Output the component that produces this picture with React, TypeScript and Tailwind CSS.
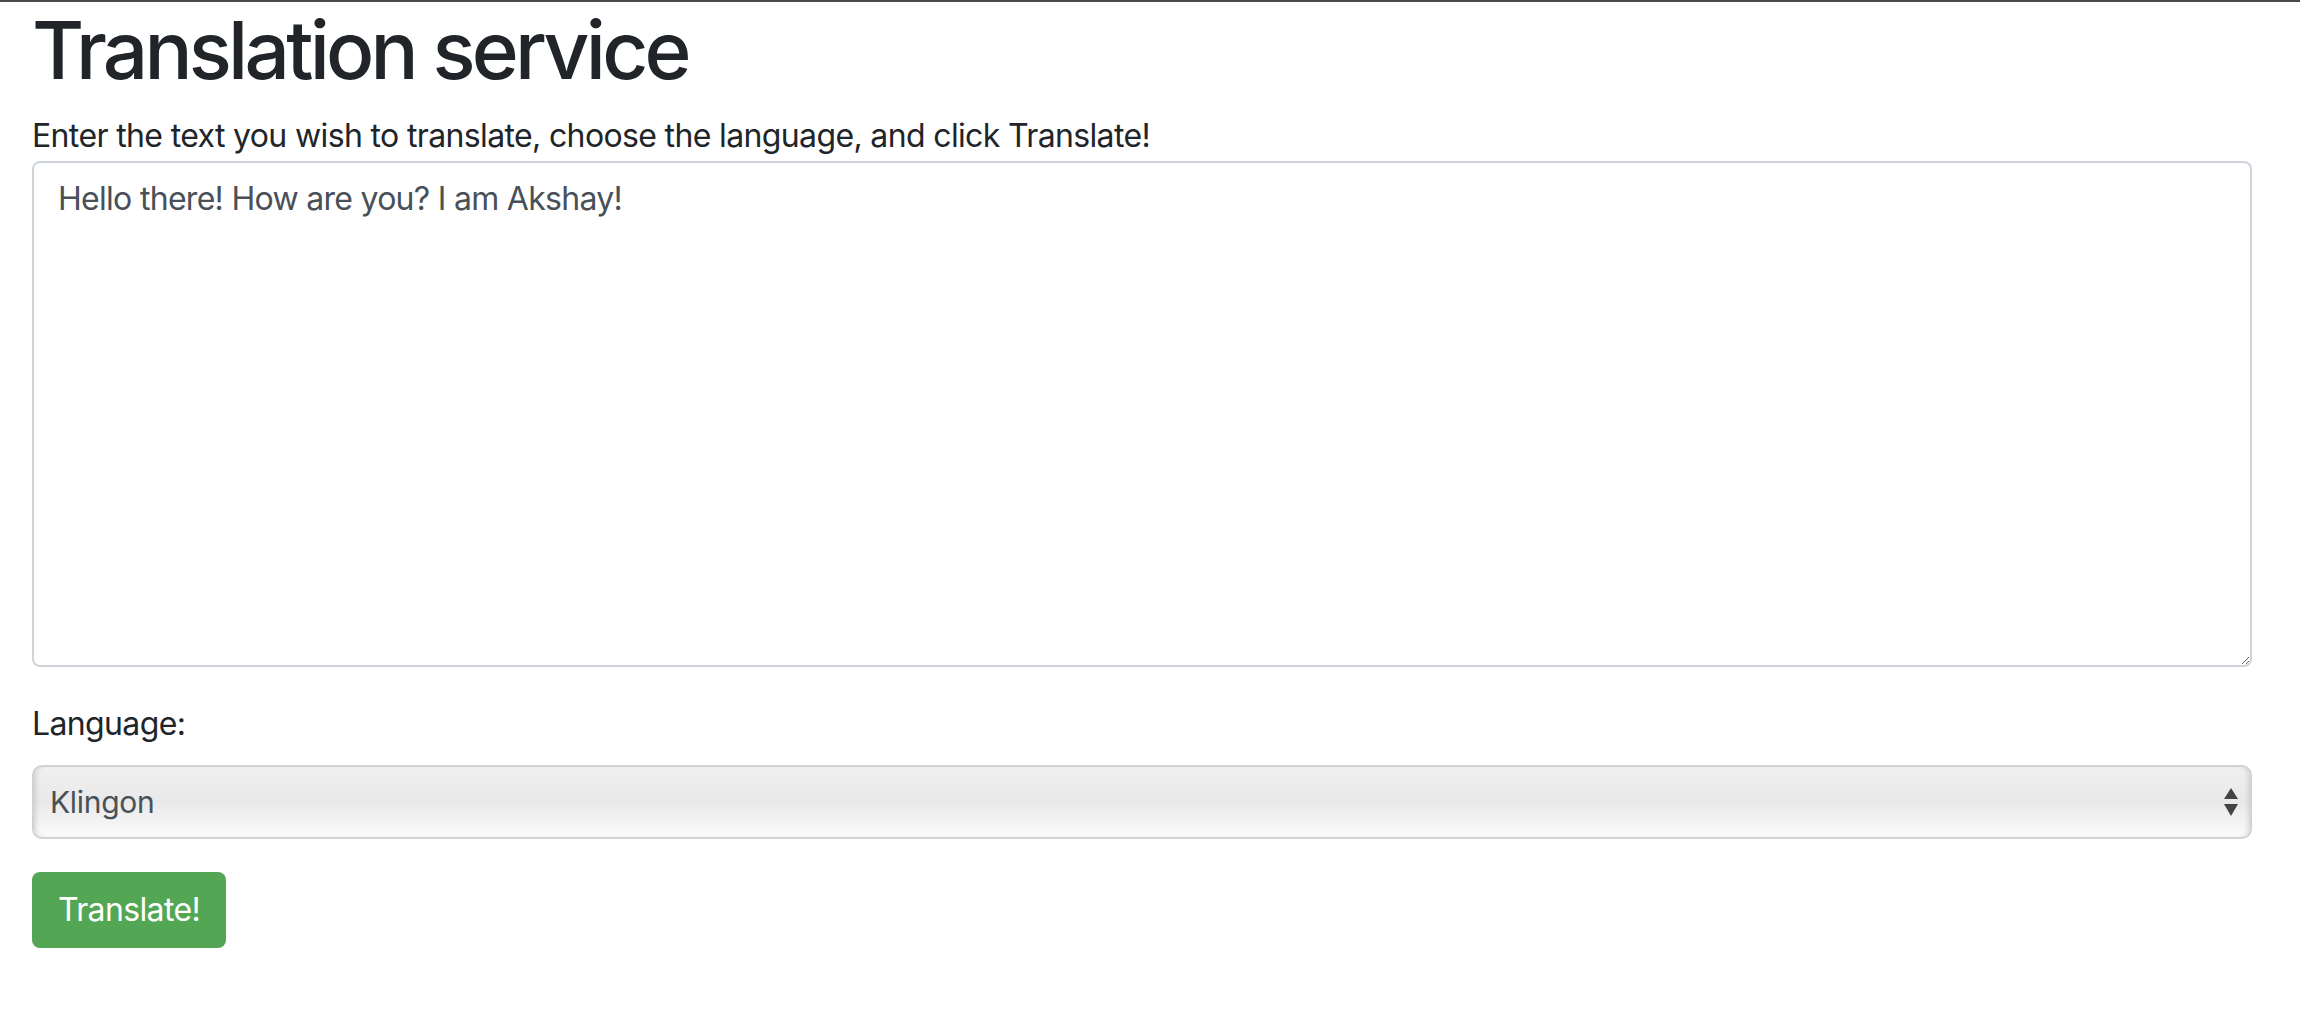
import React from 'react';

const languages = ['Klingon', 'French', 'Spanish', 'German', 'Japanese'];

export default function App() {
  const [text, setText] = React.useState('Hello there! How are you? I am Akshay!');
  const [language, setLanguage] = React.useState('Klingon');

  return (
    <div className="min-h-screen bg-white border-t-2 border-[#4a4a4a] pl-[32px] pr-[48px] font-['Inter',sans-serif] text-[#212529]">
      <h1 className="text-[80px] leading-[96px] font-medium tracking-[-0.047em] mb-[14px]">
        Translation service
      </h1>

      <label className="block text-[32px] leading-[48px] tracking-[-0.02em]">
        Enter the text you wish to translate, choose the language, and click Translate!
      </label>

      <textarea
        value={text}
        onChange={(e) => setText(e.target.value)}
        className="mt-[1px] block w-full h-[506px] border-2 border-[#ced4da] rounded-[8px] px-[24px] py-[12px] text-[32px] leading-[48px] tracking-[-0.022em] text-[#495057] outline-none"
      />

      <label className="block mt-[33px] text-[32px] leading-[48px] tracking-[-0.02em]">Language:</label>

      {/* select with a mac-like look */}
      <div className="relative mt-[17px]">
        <select
          value={language}
          onChange={(e) => setLanguage(e.target.value)}
          className="block w-full h-[74px] appearance-none border-2 border-[#cfd3d8] rounded-[10px] pl-[16px] pr-[48px] text-[30px] tracking-[-0.01em] text-[#495057] outline-none bg-gradient-to-b from-[#f0f0f0] via-[#e9e9e9] to-[#fbfbfb] shadow-[inset_5px_0_5px_-3px_rgba(0,0,0,0.12),inset_-5px_0_5px_-3px_rgba(0,0,0,0.12)]"
        >
          {languages.map((l) => (
            <option key={l} value={l}>
              {l}
            </option>
          ))}
        </select>
        <svg
          className="pointer-events-none absolute right-[14px] top-1/2 -translate-y-1/2"
          width="14"
          height="28"
          viewBox="0 0 14 28"
        >
          <polygon points="7,0 14,11 0,11" fill="#444" />
          <polygon points="0,16 14,16 7,28" fill="#444" />
        </svg>
      </div>

      <button className="mt-[33px] block bg-[#53a653] text-white text-[32px] leading-[48px] tracking-[-0.02em] px-[26px] py-[14px] rounded-[8px]">
        Translate!
      </button>
    </div>
  );
}
